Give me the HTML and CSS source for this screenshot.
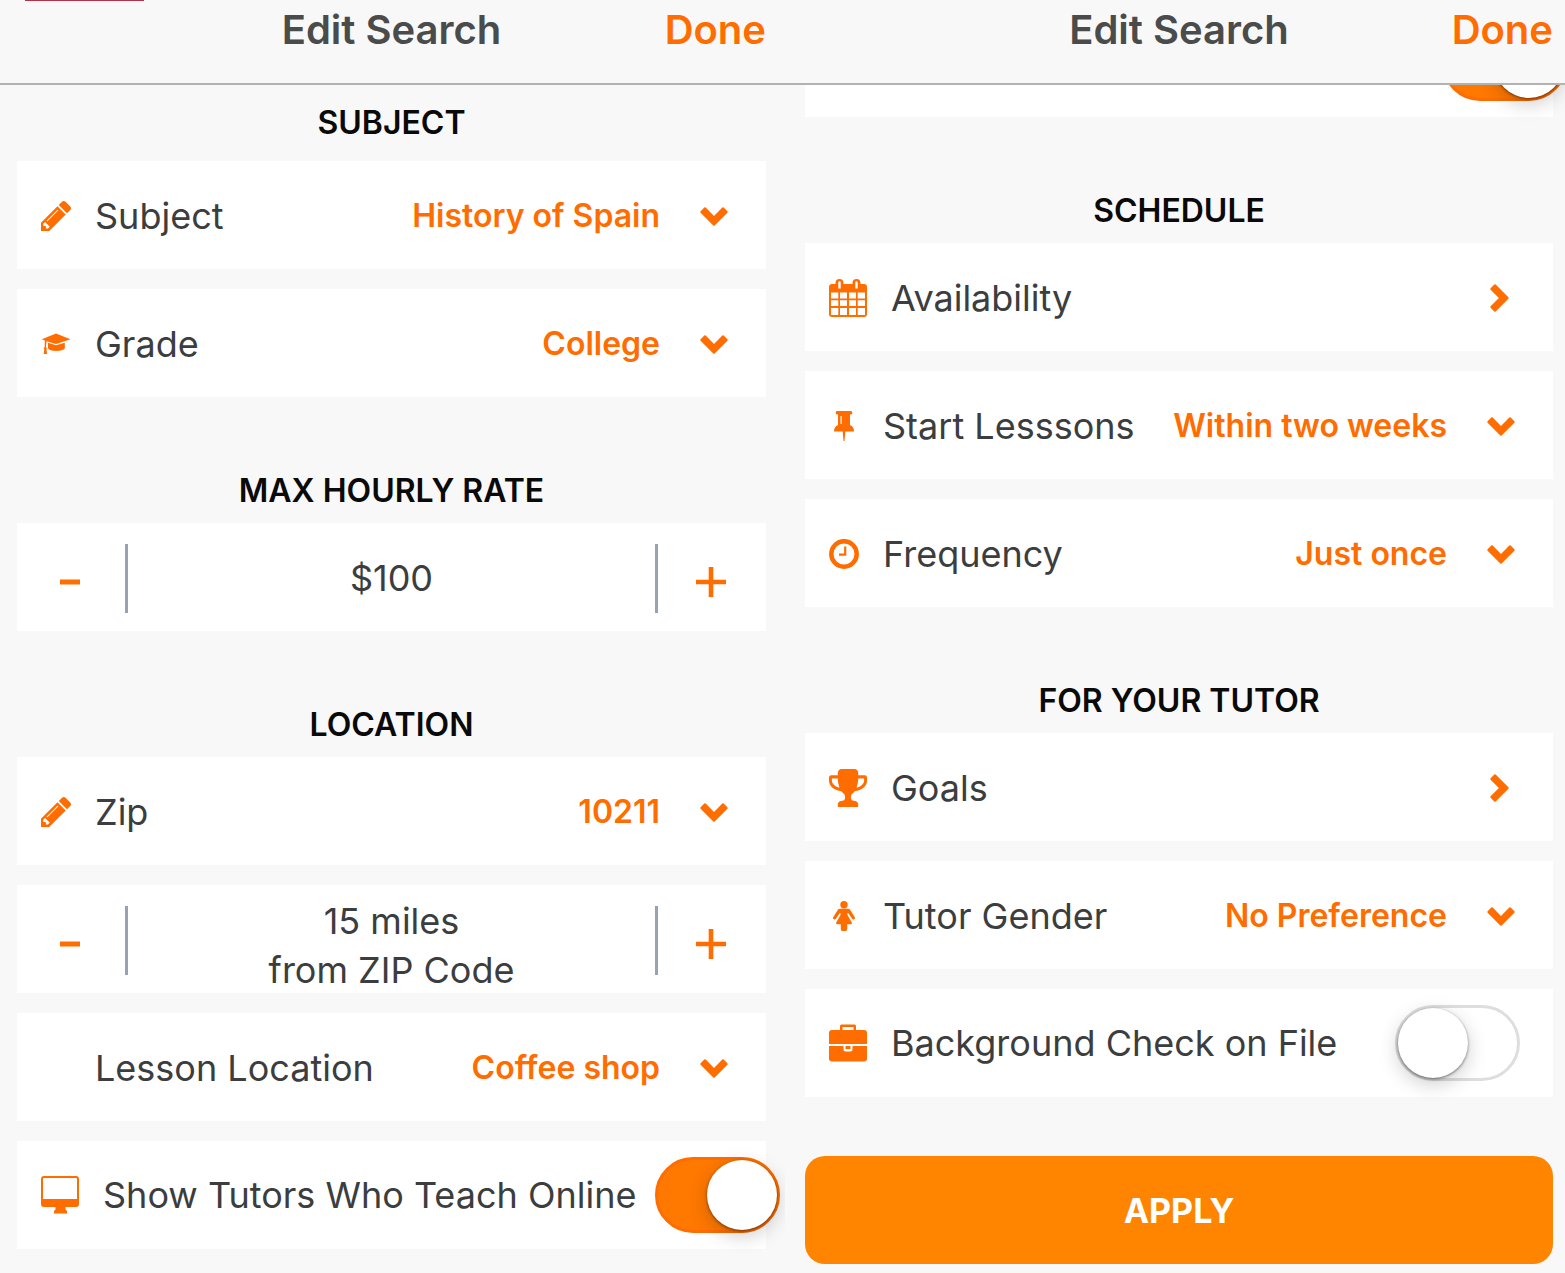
FILE: index.html
```html
<!DOCTYPE html>
<html lang="en">
<head>
<meta charset="utf-8">
<meta name="viewport" content="width=device-width, initial-scale=1">
<title>Edit Search</title>
<link rel="stylesheet" href="styles.css">
</head>
<body>
<svg class="sprite" aria-hidden="true">
  <symbol id="pencil" viewBox="140 149 1515 1515"><path d="M491 1536l91-91-235-235-91 91v107h128v128h107zM1014 608q0-22-22-22-10 0-17 7l-542 542q-7 7-7 17 0 22 22 22 10 0 17-7l542-542q7-7 7-17zM972 416l416 416-832 832h-416v-416zM1655 512q0 53-37 90l-166 166-416-416 166-165q36-38 90-38 53 0 91 38l235 234q37 39 37 91z"/></symbol>
  <symbol id="down" viewBox="0 0 28 19"><path d="M13.300 18.400L.600 5.700Q0 5 .600 4.300L4.300.600Q5 0 5.700.600L14 8.900 22.300.600Q23 0 23.700.600L27.400 4.300Q28 5 27.400 5.700L14.700 18.400Q14 19 13.300 18.400z"/></symbol>
  <symbol id="right" viewBox="0 0 19 28"><path d="M18.400 13.300L5.700.600Q5 0 4.300.600L.600 4.300Q0 5 .600 5.700L8.900 14 .600 22.300Q0 23 .600 23.700L4.300 27.400Q5 28 5.700 27.400L18.400 14.700Q19 14 18.400 13.300z"/></symbol>
</svg>
<main class="screens">
  <section class="screen screen-start">
    <header class="bar">
      <h1 class="bar-title">Edit Search</h1>
      <button class="done" type="button">Done</button>
    </header>
    <form class="content">
      <h2 class="heading heading-first">Subject</h2>
      <div class="cards">
        <div class="card row">
          <svg class="icon" aria-hidden="true"><use href="#pencil"/></svg>
          <label class="label" for="subject">Subject</label>
          <select class="value" id="subject"><option>History of Spain</option></select>
          <svg class="down" aria-hidden="true"><use href="#down"/></svg>
        </div>
        <div class="card row">
          <svg class="icon" viewBox="0 0 30 30" aria-hidden="true"><path d="M15 4.500L29.500 10.300 15 15 5.500 12.200 5 18l.900 1.500L5.500 20l.5 5H2.700l.6-5-.6-.6.9-1.400.3-6.400L.8 10.300zM7 13.700l8 2.500 8.800-2.500v5.500c-1 2-4 2.700-8.800 2.700-4 0-7-1-8-2.700z"/></svg>
          <label class="label" for="grade">Grade</label>
          <select class="value" id="grade"><option>College</option></select>
          <svg class="down" aria-hidden="true"><use href="#down"/></svg>
        </div>
      </div>
      <h2 class="heading">Max Hourly Rate</h2>
      <div class="cards">
        <div class="card stepper">
          <button class="step step-minus" type="button" aria-label="Lower rate"><svg class="sign" viewBox="0 0 30 30"><path d="M5 12.500h20v5H5z"/></svg></button>
          <output class="amount">$100</output>
          <button class="step step-plus" type="button" aria-label="Raise rate"><svg class="sign" viewBox="0 0 30 30"><path d="M0 12.700h12.700V0h4.600v12.700H30v4.600H17.300V30h-4.600V17.300H0z"/></svg></button>
        </div>
      </div>
      <h2 class="heading">Location</h2>
      <div class="cards">
        <div class="card row">
          <svg class="icon" aria-hidden="true"><use href="#pencil"/></svg>
          <label class="label" for="zip">Zip</label>
          <select class="value" id="zip"><option>10211</option></select>
          <svg class="down" aria-hidden="true"><use href="#down"/></svg>
        </div>
        <div class="card stepper">
          <button class="step step-minus" type="button" aria-label="Fewer miles"><svg class="sign" viewBox="0 0 30 30"><path d="M5 12.500h20v5H5z"/></svg></button>
          <output class="amount amount-tall">15 miles<br>from ZIP Code</output>
          <button class="step step-plus" type="button" aria-label="More miles"><svg class="sign" viewBox="0 0 30 30"><path d="M0 12.700h12.700V0h4.600v12.700H30v4.600H17.300V30h-4.600V17.300H0z"/></svg></button>
        </div>
        <div class="card row">
          <span class="icon"></span>
          <label class="label" for="place">Lesson Location</label>
          <select class="value" id="place"><option>Coffee shop</option></select>
          <svg class="down" aria-hidden="true"><use href="#down"/></svg>
        </div>
        <div class="card row row-switch">
          <svg class="icon icon-large" viewBox="0 0 38 38" aria-hidden="true"><path fill-rule="evenodd" d="M3 0h32q3 0 3 3v25q0 3-3 3H24.500v2.500l1.500 1.500v2.500H13V35l1.500-1.500V31H3q-3 0-3-3V3Q0 0 3 0zM3 2Q2 2 2 3v20h34V3q0-1-1-1z"/></svg>
          <label class="label" for="online">Show Tutors Who Teach Online</label>
          <input class="switch switch-outset" id="online" type="checkbox" checked>
        </div>
      </div>
    </form>
  </section>

  <section class="screen screen-end">
    <header class="bar">
      <h1 class="bar-title">Edit Search</h1>
      <button class="done" type="button">Done</button>
    </header>
    <form class="content">
      <div class="cards cards-scrolled">
        <div class="card row row-switch">
          <input class="switch switch-outset" type="checkbox" aria-label="Show Tutors Who Teach Online" checked>
        </div>
      </div>
      <h2 class="heading">Schedule</h2>
      <div class="cards">
        <button class="card row row-link" type="button">
          <svg class="icon icon-large" viewBox="0 0 38 38" aria-hidden="true"><path fill-rule="evenodd" d="M3 5h3.500V4q0-4 4-4t4 4v1h9V4q0-4 4-4t4 4v1H35q3 0 3 3v27q0 3-3 3H3q-3 0-3-3V8q0-3 3-3zM9.300 3.500v6h2.400v-6q0-1.200-1.200-1.200T9.300 3.500zM26.300 3.500v6h2.400v-6q0-1.200-1.200-1.200t-1.200 1.200zM2 13.500v6h7.300v-6zM11 13.500v6h7v-6zM20 13.500v6h7v-6zM28.700 13.500v6H36v-6zM2 21.300v5.700h7.300v-5.700zM11 21.300v5.700h7v-5.700zM20 21.300v5.700h7v-5.700zM28.700 21.300v5.700H36v-5.700zM2 29v7h7.300v-7zM11 29v7h7v-7zM20 29v7h7v-7zM28.700 29v7H36v-7z"/></svg>
          <span class="label">Availability</span>
          <svg class="right" aria-hidden="true"><use href="#right"/></svg>
        </button>
        <div class="card row">
          <svg class="icon" viewBox="0 0 30 30" aria-hidden="true"><path fill-rule="evenodd" d="M8 0h14q1.300 0 1.300 1.700T22 3.500h-1v10.500q4 1.500 4 6.500h-8.700L15.500 30h-1l-.8-9.500H5Q5 15.500 9 14V3.500H8q-1.300 0-1.300-1.800T8 0zM11.500 5v8h1.200V5z"/></svg>
          <label class="label" for="start">Start Lesssons</label>
          <select class="value" id="start"><option>Within two weeks</option></select>
          <svg class="down" aria-hidden="true"><use href="#down"/></svg>
        </div>
        <div class="card row">
          <svg class="icon icon-line" viewBox="0 0 30 30" aria-hidden="true"><circle cx="15" cy="15" r="12.700" stroke-width="4.500"/><path d="M16.200 7.500v8.200H10" stroke-width="2.200"/></svg>
          <label class="label" for="frequency">Frequency</label>
          <select class="value" id="frequency"><option>Just once</option></select>
          <svg class="down" aria-hidden="true"><use href="#down"/></svg>
        </div>
      </div>
      <h2 class="heading">For Your Tutor</h2>
      <div class="cards">
        <button class="card row row-link" type="button">
          <svg class="icon icon-large" viewBox="64 128 1664 1536" preserveAspectRatio="none" aria-hidden="true"><path d="M522 883q-74-162-74-371h-256v96q0 78 94.500 162t235.500 113zM1600 608v-96h-256q0 209-74 371 141-29 235.500-113t94.500-162zM1728 480v128q0 71-41.500 143t-112 130-173 97.500-215.500 44.500q-42 54-95 95-38 34-52.500 72.500t-14.500 89.500q0 54 30.500 91t97.500 37q75 0 133.500 45.500t58.500 114.500v64q0 14-9 23t-23 9h-832q-14 0-23-9t-9-23v-64q0-69 58.500-114.500t133.500-45.500q67 0 97.500-37t30.500-91q0-51-14.500-89.500t-52.500-72.500q-53-41-95-95-113-5-215.500-44.500t-173-97.500-112-130-41.500-143v-128q0-40 28-68t68-28h288v-96q0-66 47-113t113-47h576q66 0 113 47t47 113v96h288q40 0 68 28t28 68z"/></svg>
          <span class="label">Goals</span>
          <svg class="right" aria-hidden="true"><use href="#right"/></svg>
        </button>
        <div class="card row">
          <svg class="icon" viewBox="0 0 30 30" aria-hidden="true"><circle cx="15" cy="3.700" r="3.700"/><path d="M11 7.800h8q1.500 0 2.300 1.200l4.400 7q.8 1.400-.4 2.200-1.300.7-2.200-.5L19.200 12h-.7v2l4.300 7.500q.8 1.700-1 1.700h-3.600V28q0 2-1.700 2h-3q-1.700 0-1.700-2v-4.800H8.200q-1.800 0-1-1.700l4.300-7.500v-2h-.7l-3.900 5.700q-.9 1.200-2.200.5-1.200-.8-.4-2.200l4.400-7q.8-1.200 2.300-1.200z"/></svg>
          <label class="label" for="gender">Tutor Gender</label>
          <select class="value" id="gender"><option>No Preference</option></select>
          <svg class="down" aria-hidden="true"><use href="#down"/></svg>
        </div>
        <div class="card row row-switch">
          <svg class="icon icon-large" viewBox="0 0 38 38" aria-hidden="true"><path fill-rule="evenodd" d="M11 6V2q0-1.500 1.500-1.500h13Q27 .5 27 2v4h8q3 0 3 3v11H0V9q0-3 3-3zM13.500 3v3h11V3zM0 22h14.500v3q0 2.500 2 2.500h5q2 0 2-2.500v-3H38v12.500q0 3-3 3H3q-3 0-3-3zM16.500 22h5v3h-5z"/></svg>
          <label class="label" for="check">Background Check on File</label>
          <input class="switch" id="check" type="checkbox">
        </div>
      </div>
      <button class="apply" type="submit">Apply</button>
    </form>
  </section>
</main>
</body>
</html>
```
FILE: styles.css
```css
* {
  box-sizing: border-box;
}

body {
  margin: 0;
  background: #f8f8f8;
  color: #3b3d3e;
  font-family: Inter, "Liberation Sans", sans-serif;
}

button,
select {
  margin: 0;
  padding: 0;
  border: 0;
  background: none;
  color: inherit;
  font: inherit;
  cursor: pointer;
}

.sprite {
  display: none;
}

.screens {
  display: grid;
  grid-template-columns: 785fr 780fr;
}

.screen {
  position: relative;
  min-width: 0;
  overflow: clip;
}

.screen-start {
  --pad-left: 17px;
  --pad-right: 19px;
}

.screen-end {
  --pad-left: 20px;
  --pad-right: 12px;
}

/* Tail of the recording badge that hangs over the first screen */
.screen-start::before {
  content: "";
  position: absolute;
  z-index: 2;
  top: 0;
  left: 25px;
  width: 119px;
  height: 1px;
  background: #b5314a;
}

.bar {
  position: relative;
  z-index: 1;
  display: grid;
  grid-template-columns: 1fr auto 1fr;
  padding: 6px var(--pad-right) 29px var(--pad-left);
  border-bottom: 2px solid #b2b2b2;
  background: #f8f8f8;
  font-size: 40px;
  font-weight: 600;
  line-height: 48px;
}

.bar-title {
  grid-column: 2;
  margin: 0;
  color: #4a4b4b;
  font: inherit;
}

.done {
  justify-self: end;
  color: #ff6d00;
}

.content {
  padding: 0 var(--pad-right) 9px var(--pad-left);
}

.heading {
  margin: 0;
  padding: 74px 0 12px;
  color: #0a0a0a;
  font-size: 32px;
  font-weight: 600;
  line-height: 40px;
  text-align: center;
  text-transform: uppercase;
}

.heading-first {
  padding: 18px 0;
}

.cards {
  display: grid;
  gap: 20px;
}

.cards-scrolled {
  margin-top: -76px;
}

.card {
  display: flex;
  align-items: center;
  min-height: 108px;
  padding-top: 2px;
  background: #fff;
  font-size: 36px;
  line-height: 48px;
}

.row {
  padding-right: 38px;
  padding-left: 24px;
}

.row-link {
  padding-right: 44px;
  text-align: left;
}

.row-switch {
  padding-top: 0;
  padding-right: 33px;
}

.icon {
  flex: none;
  width: 30px;
  height: 30px;
  margin-right: 24px;
  fill: #ff6d00;
}

.icon-large {
  width: 38px;
  height: 38px;
}

.icon-line {
  fill: none;
  stroke: #ff6d00;
}

.label {
  flex: none;
  white-space: nowrap;
}

.value {
  flex: 1;
  min-width: 0;
  appearance: none;
  color: #ff6d00;
  font-size: 32px;
  font-weight: 600;
  line-height: 48px;
  text-align: right;
  text-align-last: right;
}

.down {
  flex: none;
  width: 28px;
  height: 19px;
  margin-left: 40px;
  fill: #ff6d00;
}

.right {
  width: 19px;
  height: 28px;
  margin-left: auto;
  fill: #ff6d00;
}

.step {
  display: grid;
  flex: none;
  place-items: center;
  width: 111px;
  height: 69px;
  padding: 8px 2px 0 0;
}

.step-minus {
  border-right: 3px solid #98a2b3;
}

.step-plus {
  border-left: 3px solid #98a2b3;
}

.sign {
  width: 30px;
  height: 30px;
  fill: #ff6d00;
}

.amount {
  flex: 1;
  line-height: 49px;
  text-align: center;
}

.amount-tall {
  margin-bottom: -2px;
  padding-top: 10px;
}

.switch {
  flex: none;
  appearance: none;
  width: 125px;
  height: 76px;
  margin: 0 0 0 auto;
  padding: 0;
  border: 3px solid #dedede;
  border-radius: 38px;
  background: #fff;
  cursor: pointer;
}

.switch::before {
  content: "";
  display: block;
  width: 70px;
  height: 70px;
  border-radius: 50%;
  background: #fff;
  box-shadow: 0 1px 3px rgba(0, 0, 0, .5), 0 6px 20px rgba(0, 0, 0, .2);
}

.switch:checked {
  border-color: #ff6d00;
  background: #ff7800;
}

.switch:checked::before {
  margin-left: auto;
}

/* The online switch sticks out past the card's edge */
.switch-outset {
  margin-right: -47px;
}

.apply {
  display: block;
  width: 100%;
  min-height: 108px;
  margin-top: 59px;
  border-radius: 20px;
  background: #ff8500;
  color: #fff;
  font-size: 34px;
  font-weight: 700;
  text-transform: uppercase;
}
```
